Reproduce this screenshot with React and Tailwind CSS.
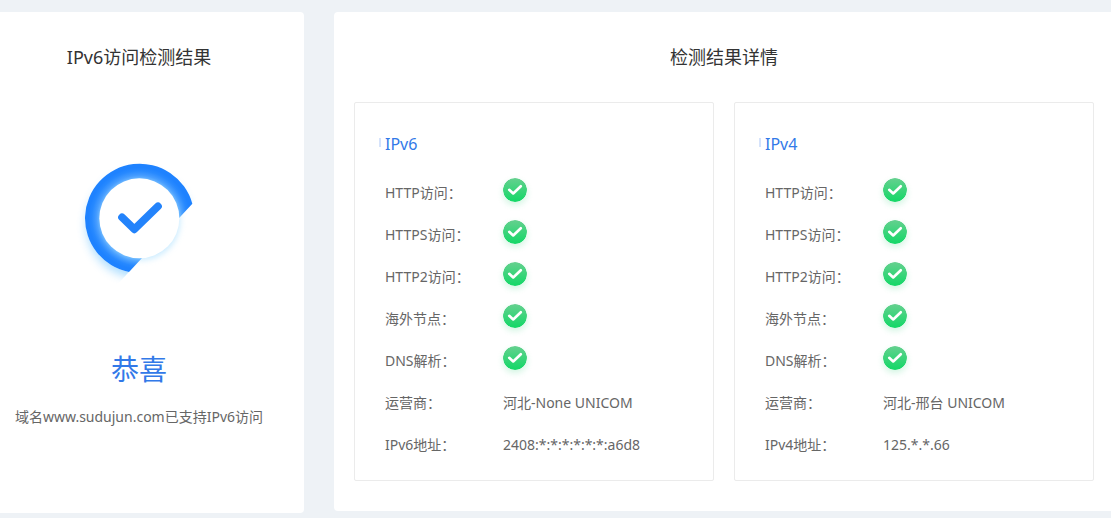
import React from "react";

const panels = [
  {
    name: "IPv6",
    rows: [
      ["HTTP访问："],
      ["HTTPS访问："],
      ["HTTP2访问："],
      ["海外节点："],
      ["DNS解析："],
      ["运营商：", "河北-None UNICOM"],
      ["IPv6地址：", "2408:*:*:*:*:*:*:a6d8"],
    ],
  },
  {
    name: "IPv4",
    rows: [
      ["HTTP访问："],
      ["HTTPS访问："],
      ["HTTP2访问："],
      ["海外节点："],
      ["DNS解析："],
      ["运营商：", "河北-邢台 UNICOM"],
      ["IPv4地址：", "125.*.*.66"],
    ],
  },
];

function PassIcon() {
  return (
    <svg
      role="img"
      aria-label="通过"
      viewBox="0 0 24 24"
      className="mt-1.5 block size-6 rounded-full shadow-[0_3px_6px_rgba(30,205,110,0.2)]"
    >
      <defs>
        <linearGradient id="pass" x1="0" y1="0" x2="0" y2="1">
          <stop offset="0" stopColor="#65d08f" />
          <stop offset="1" stopColor="#12d866" />
        </linearGradient>
      </defs>
      <circle cx="12" cy="12" r="12" fill="url(#pass)" />
      <path
        d="M6.2 11.8 L10.2 15.5 L17.8 8.2"
        fill="none"
        stroke="#fff"
        strokeWidth="2.6"
        strokeLinecap="round"
        strokeLinejoin="round"
      />
    </svg>
  );
}

function ResultBadge() {
  return (
    <svg viewBox="-3 0 480 480" className="block size-40" aria-hidden="true">
      <defs>
        <radialGradient id="ring" gradientUnits="userSpaceOnUse" cx="238" cy="235" r="164">
          <stop offset="0.72" stopColor="#6bb5ff" />
          <stop offset="0.78" stopColor="#479dff" />
          <stop offset="0.87" stopColor="#2789ff" />
          <stop offset="0.93" stopColor="#1e82ff" />
          <stop offset="1" stopColor="#1e82ff" />
        </radialGradient>
        <filter id="soft" x="-30%" y="-30%" width="160%" height="160%">
          <feGaussianBlur stdDeviation="15" />
        </filter>
        <filter id="softer" x="-30%" y="-30%" width="160%" height="160%">
          <feGaussianBlur stdDeviation="9" />
        </filter>
        <clipPath id="cut">
          <path d="M0 0 H480 V99 L130 479 H0 Z" />
        </clipPath>
      </defs>
      <g clipPath="url(#cut)">
        <circle cx="238" cy="254" r="160" fill="#4fb8ff" opacity="0.45" filter="url(#soft)" />
      </g>
      <path d="M207 396 A164 164 0 1 1 397 191 Z" fill="#fff" />
      <path d="M207 396 A164 164 0 1 1 397 191 Z" fill="url(#ring)" />
      <circle cx="242" cy="242" r="118" fill="#8fd6ff" opacity="0.5" filter="url(#softer)" />
      <circle cx="238" cy="235" r="120" fill="#fff" />
      <path
        d="M186 232 L223 268 L294 199"
        fill="none"
        stroke="#2383fb"
        strokeWidth="23"
        strokeLinecap="round"
        strokeLinejoin="round"
      />
    </svg>
  );
}

function Panel({ name, rows }) {
  return (
    <section className="min-w-0 flex-1 rounded-xs border border-[#ebebeb] pt-5 pr-7 pb-3.5 pl-[30px]">
      <h3 className="relative mb-[7px] text-base leading-[42px] text-[#3279e8] before:absolute before:top-[15px] before:-left-1.5 before:h-[9px] before:w-0.5 before:bg-[#d6e3fb]">
        {name}
      </h3>
      <table className="w-full table-fixed text-left">
        <tbody>
          {rows.map(([label, value]) => (
            <tr key={label} className="h-[42px]">
              <th scope="row" className="w-[118px] p-0 align-top font-normal leading-[42px]">
                {label}
              </th>
              <td className="p-0 align-top leading-[42px]">{value ?? <PassIcon />}</td>
            </tr>
          ))}
        </tbody>
      </table>
    </section>
  );
}

export default function App() {
  return (
    <div className="min-h-screen bg-[#eef2f6] pt-3 font-['Noto_Sans','Noto_Sans_CJK_SC',sans-serif] text-sm text-[#666]">
      <main className="flex items-start gap-[30px]">
        <section className="flex w-[304px] shrink-0 flex-col items-center rounded-r bg-white pr-[26px] pb-[75px]">
          <h2 className="text-lg leading-[90px] text-[#333]">IPv6访问检测结果</h2>
          <div className="mt-[38px]">
            <ResultBadge />
          </div>
          <p className="mt-12 text-[28px] leading-[42px] text-[#3279e8]">恭喜</p>
          <p className="mt-1.5 text-sm leading-[42px] whitespace-nowrap">
            域名www.sudujun.com已支持IPv6访问
          </p>
        </section>
        <section className="min-w-0 flex-1 rounded-l bg-white pr-[17px] pb-[30px] pl-5">
          <h2 className="text-center text-lg leading-[90px] text-[#333]">检测结果详情</h2>
          <div className="flex gap-5">
            {panels.map((panel) => (
              <Panel key={panel.name} {...panel} />
            ))}
          </div>
        </section>
      </main>
    </div>
  );
}
